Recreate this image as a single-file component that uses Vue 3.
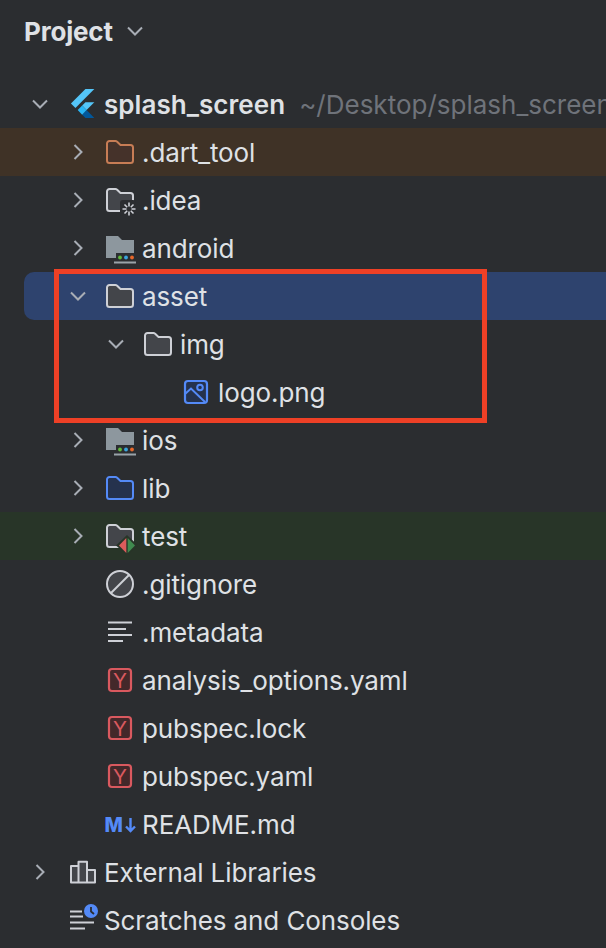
<template>
  <div class="panel">
    <div class="header">
      <span class="title">Project</span>
      <svg class="header-arrow" width="28" height="28" viewBox="0 0 28 28">
        <path d="M7 10.5 14 17.5 21 10.5" />
      </svg>
    </div>

    <div class="tree">
      <div
        v-for="row in rows"
        :key="row.name"
        class="row"
        :class="row.tone"
        :style="rowStyle(row)"
      >
        <svg class="arrow" width="28" height="28" viewBox="0 0 28 28">
          <path v-if="row.arrow === 'open'" d="M7 10.5 14 17.5 21 10.5" />
          <path v-else-if="row.arrow === 'closed'" d="M10.5 7 17.5 14 10.5 21" />
        </svg>

        <svg class="icon" width="28" height="28" viewBox="0 0 28 28">
          <g v-if="row.icon === 'flutter'" transform="translate(1.4 -2.700) scale(.16)">
            <path fill="#54c5f8" d="M37.7 128.9 9.8 101 100.4 10.4h55.5z" />
            <path fill="#54c5f8" d="M155.9 93.5h-55.5L79.6 114.3l27.7 27.7z" />
            <path fill="#01579b" d="M79.6 170.9l20.8 20.8h55.5L107.3 142z" />
            <path fill="#29b6f6" d="M79.6 114.3 107.3 142 79.6 170.9 52 142.5z" />
          </g>

          <template v-else-if="row.icon === 'folder'">
            <path class="folder" :d="folderPath" />
          </template>

          <template v-else-if="row.icon === 'orange'">
            <path class="folder orange" :d="folderPath" />
          </template>

          <template v-else-if="row.icon === 'blue'">
            <path class="folder blue" :d="folderPath" />
          </template>

          <template v-else-if="row.icon === 'idea'">
            <path class="folder" :d="folderPath" />
            <rect class="notch" x="14" y="14" width="16" height="16" rx="3" />
            <path class="spark" d="M23 16.500v4M23 25.500v4M16.500 23h4M25.500 23h4M18.500 18.500l2.700 2.700M24.800 24.800l2.700 2.700M27.500 18.500l-2.700 2.700M21.200 24.800l-2.700 2.700" />
          </template>

          <template v-else-if="row.icon === 'test'">
            <path class="folder" :d="folderPath" />
            <path fill="#283528" d="M21 13 32 23.500 21 33 10 23.500z" />
            <path fill="#db5c5c" d="M20.300 16V31L13 23.500z" />
            <path fill="#3f8a4e" d="M21.700 16V31L29 23.500z" />
          </template>

          <template v-else-if="row.icon === 'module'">
            <path fill="#8d979e" d="M0 2h12l4 4h12v18H0z" />
            <rect x="10" y="19" width="18" height="7" fill="#2b2d30" />
            <circle cx="14" cy="23.500" r="1.900" fill="#5fb83a" />
            <circle cx="20" cy="23.500" r="1.900" fill="#3ba5dd" />
            <circle cx="26" cy="23.500" r="1.900" fill="#e8672a" />
            <rect x="8" y="27.500" width="22" height="2" fill="#9aa3a9" />
          </template>

          <template v-else-if="row.icon === 'image'">
            <rect x="3" y="3" width="22" height="22" rx="3" fill="#25324d" stroke="#548af7" stroke-width="2.200" />
            <circle cx="18" cy="9.500" r="2.800" fill="none" stroke="#548af7" stroke-width="2" />
            <path d="M3 16 9 10.500 23 24" fill="none" stroke="#548af7" stroke-width="2" />
          </template>

          <template v-else-if="row.icon === 'ignore'">
            <circle cx="14" cy="14" r="13" fill="#43454a" stroke="#ced0d6" stroke-width="2" />
            <path d="M5 23 23 5" stroke="#ced0d6" stroke-width="2" />
          </template>

          <template v-else-if="row.icon === 'lines'">
            <path class="lines" d="M2 4.500h24M2 11h18M2 17h24M2 23h15" />
          </template>

          <template v-else-if="row.icon === 'yaml'">
            <rect x="3" y="3" width="22" height="22" rx="3" fill="#43282a" stroke="#d9595f" stroke-width="2.200" />
            <text x="14" y="22" class="yaml-letter">Y</text>
          </template>

          <template v-else-if="row.icon === 'md'">
            <text x="-1.500" y="22" class="md-letter">M</text>
            <path d="M24.500 8v13M20 16.500 24.500 21l4.500-4.500" fill="none" stroke="#548af7" stroke-width="2.400" />
          </template>

          <template v-else-if="row.icon === 'library'">
            <path
              d="M3 8h7.500v16.500H3zM10.500 3.700H19v20.800h-8.500zM19 12h8v12.500h-8z"
              fill="#43454a"
              stroke="#ced0d6"
              stroke-width="2"
              stroke-linejoin="round"
            />
          </template>

          <template v-else-if="row.icon === 'scratch'">
            <path class="lines" d="M2 5.500h12M2 10.500h13M2 16.500h24M2 22.500h15" />
            <circle cx="23" cy="5" r="7" fill="#548af7" />
            <path d="M23 1v4.500l3 2.500" fill="none" stroke="#2b2d30" stroke-width="1.800" />
          </template>
        </svg>

        <span class="name" :class="{ bold: row.bold }">{{ row.name }}</span>
        <span v-if="row.path" class="path">{{ row.path }}</span>
      </div>
    </div>

    <!-- annotation drawn over the tree -->
    <div class="callout"></div>
  </div>
</template>

<script setup>
const folderPath =
  "M3.500 3H9.500a2 2 0 0 1 1.400.6L14.500 7H24.500a2.500 2.500 0 0 1 2.500 2.500V22.500a2.500 2.500 0 0 1-2.500 2.500H3.500a2.500 2.500 0 0 1-2.500-2.500V5.500a2.500 2.500 0 0 1 2.500-2.500Z";

const rows = [
  { name: "splash_screen", depth: 0, arrow: "open", icon: "flutter", bold: true, path: "~/Desktop/splash_screen" },
  { name: ".dart_tool", depth: 1, arrow: "closed", icon: "orange", tone: "excluded" },
  { name: ".idea", depth: 1, arrow: "closed", icon: "idea" },
  { name: "android", depth: 1, arrow: "closed", icon: "module" },
  { name: "asset", depth: 1, arrow: "open", icon: "folder", tone: "selected" },
  { name: "img", depth: 2, arrow: "open", icon: "folder" },
  { name: "logo.png", depth: 3, icon: "image" },
  { name: "ios", depth: 1, arrow: "closed", icon: "module" },
  { name: "lib", depth: 1, arrow: "closed", icon: "blue" },
  { name: "test", depth: 1, arrow: "closed", icon: "test", tone: "tests" },
  { name: ".gitignore", depth: 1, icon: "ignore" },
  { name: ".metadata", depth: 1, icon: "lines" },
  { name: "analysis_options.yaml", depth: 1, icon: "yaml" },
  { name: "pubspec.lock", depth: 1, icon: "yaml" },
  { name: "pubspec.yaml", depth: 1, icon: "yaml" },
  { name: "README.md", depth: 1, icon: "md" },
  { name: "External Libraries", depth: 0, arrow: "closed", icon: "library" },
  { name: "Scratches and Consoles", depth: 0, icon: "scratch" },
];

const rowStyle = (row) => {
  const left = 26 + row.depth * 38 - (row.tone === "selected" ? 24 : 0);
  return { paddingLeft: left + "px" };
};
</script>

<style>
body {
  background: #2b2d30;
}
</style>

<style scoped>
.panel {
  position: relative;
  width: 606px;
  height: 948px;
  overflow: hidden;
  background: #2b2d30;
  color: #dfe1e5;
  font-family: Inter, "Noto Sans", sans-serif;
  font-size: 26px;
}

.header {
  display: flex;
  align-items: center;
  height: 62px;
  margin-bottom: 18px;
  padding-left: 24px;
}

.title {
  font-weight: 700;
  letter-spacing: -0.2px;
}

.header-arrow {
  margin-left: 8px;
}

.header-arrow path,
.arrow path {
  fill: none;
  stroke: #a8adb5;
  stroke-width: 2;
}

.row {
  display: flex;
  align-items: center;
  height: 48px;
  white-space: nowrap;
  letter-spacing: -0.1px;
}

.excluded {
  background: #3f3226;
}

.tests {
  background: #283528;
}

.selected {
  margin-left: 24px;
  border-radius: 10px 0 0 10px;
  background: #2e436e;
}

.arrow {
  flex: none;
  margin-right: 14px;
}

.icon {
  flex: none;
  margin-right: 8px;
  overflow: visible;
}

.folder {
  fill: #43454a;
  stroke: #ced0d6;
  stroke-width: 2;
}

.folder.orange {
  fill: #45322a;
  stroke: #c77d55;
}

.folder.blue {
  fill: #25324d;
  stroke: #548af7;
}

.notch {
  fill: #2b2d30;
}

.spark {
  fill: none;
  stroke: #ced0d6;
  stroke-width: 1.600;
}

.lines {
  fill: none;
  stroke: #ced0d6;
  stroke-width: 2;
}

.yaml-letter {
  fill: #d9595f;
  font-size: 20.500px;
  text-anchor: middle;
}

.md-letter {
  fill: #548af7;
  font-size: 19.500px;
  font-weight: 800;
}

.name.bold {
  font-weight: 600;
  letter-spacing: 0.05px;
}

.path {
  margin-left: 14px;
  color: #6f737a;
  letter-spacing: 0;
}

.callout {
  position: absolute;
  left: 54px;
  top: 269px;
  width: 433px;
  height: 154px;
  box-sizing: border-box;
  border: 5px solid #ee4026;
}
</style>
